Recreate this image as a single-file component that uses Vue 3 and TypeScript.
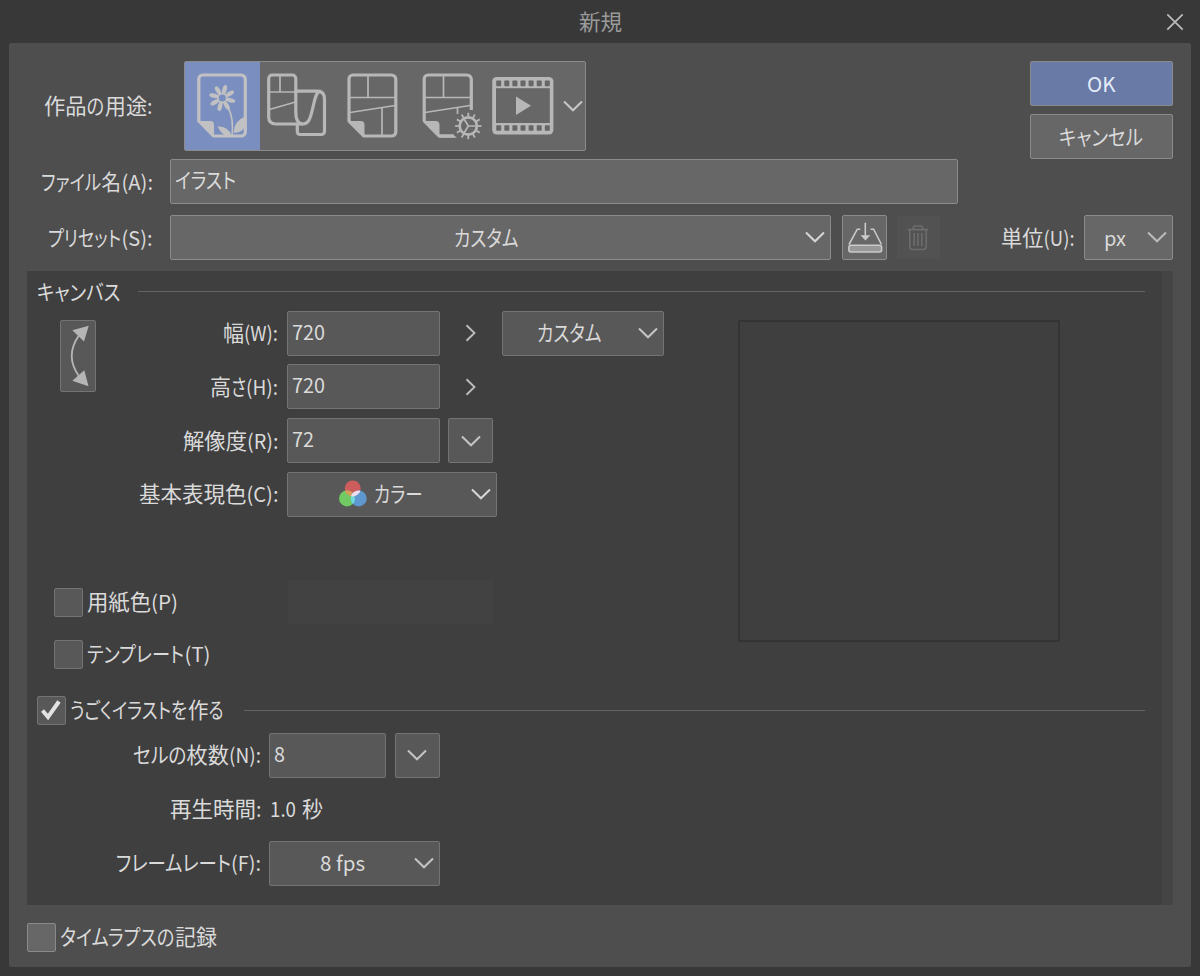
<script setup lang="ts">
import { h, ref } from 'vue'
import type { FunctionalComponent } from 'vue'

// A run is [text, horizontal offset, set width]; kana is set narrower than kanji.
type Run = [string, number, number]

const Txt: FunctionalComponent<{ runs: Run[] }> = (props) => {
  const last = props.runs[props.runs.length - 1]
  return h(
    'svg',
    { class: 'txt', width: last[1] + last[2], height: 30 },
    [
      h(
        'text',
        { y: 23.3 },
        props.runs.map(([text, x, width]) =>
          h(
            'tspan',
            {
              x,
              y: 23.3,
              textLength: width,
              lengthAdjust: 'spacingAndGlyphs',
              class: /^[\x20-\x7e]+$/.test(text) ? 'latin' : 'cjk',
            },
            text,
          ),
        ),
      ),
    ],
  )
}
Txt.props = ['runs']

const Chevron: FunctionalComponent = () =>
  h('svg', { class: 'chevron', width: 20, height: 12, viewBox: '0 0 20 12' }, [
    h('path', { d: 'M1 1.5L10 10.3L19 1.5' }),
  ])

const L: Record<string, Run[]> = {
  title: [['新規', 0, 43]],
  purpose: [['作品', 0, 42.6], ['の', 42.6, 17.6], ['用途', 60.8, 42.2], [':', 103, 5.5]],
  file: [['ファイル', 0, 60], ['名', 60.5, 19.5], ['(A):', 80.5, 31.5]],
  preset: [['プリセット', 0, 73], ['(S):', 73.5, 31]],
  unit: [['単位', 0, 42.4], ['(U):', 42.6, 31]],
  illust: [['イラスト', 0, 61]],
  custom: [['カスタム', 0, 64.5]],
  ok: [['OK', 0, 28.5]],
  cancel: [['キャンセル', 0, 84]],
  px: [['px', 0, 22]],
  canvas: [['キャンバス', 0, 83.5]],
  width: [['幅', 0, 21], ['(W):', 21, 34]],
  height: [['高', 0, 21], ['さ', 21, 15], ['(H):', 36, 32]],
  dpi: [['解像度', 0, 64], ['(R):', 64, 31.5]],
  mode: [['基本表現色', 0, 107.5], ['(C):', 107.5, 32]],
  color: [['カラー', 0, 48.5]],
  paper: [['用紙色', 0, 64], ['(P)', 64, 27]],
  template: [['テンプレート', 0, 97], ['(T)', 97.5, 26]],
  motion: [['うごくイラストを', 0, 117], ['作', 118, 20.5], ['る', 138.5, 15]],
  cels: [['セルの', 0, 53.5], ['枚数', 53.5, 42.5], ['(N):', 96, 32]],
  time: [['再生時間', 0, 86], [':', 86, 5.5]],
  seconds: [['1.0', 1, 26], ['秒', 33, 21]],
  rate: [['フレームレート', 0, 115], ['(F):', 115, 30]],
  fps: [['8 fps', 0, 45]],
  lapse: [['タイムラプスの', 0, 114.5], ['記録', 115, 42]],
  n720: [['720', 0, 33]],
  n72: [['72', 0, 22]],
  n8: [['8', 0, 11]],
}

const petals = [0, 45, 90, 135, 180, 225, 270, 315]
const teeth = Array.from({ length: 12 }, (_, i) => i * 30)
const holes = Array.from({ length: 7 }, (_, i) => 496.2 + i * 8.1)

const selected = ref(0)
const paper = ref(false)
const template = ref(false)
const motion = ref(true)
const lapse = ref(false)
</script>

<template>
  <div class="window">
    <header class="titlebar">
      <Txt class="title" :runs="L.title" />
      <svg class="close" width="18" height="18" viewBox="0 0 18 18"><path d="M1.3 1.3L16.7 16.7M16.7 1.3L1.3 16.7" /></svg>
    </header>

    <main class="body">
      <section class="top">
        <div class="top-left">
          <div class="row purpose">
            <div class="label"><Txt :runs="L.purpose" /></div>
            <div class="toolbar">
              <button class="tool first" :class="{ on: selected === 0 }" @click="selected = 0">
                <svg width="75" height="88" viewBox="185 62 75 88">
                  <path class="page" d="M198.800 121V79a4 4 0 0 1 4-4H241a4.300 4.300 0 0 1 4.300 4V132a4 4 0 0 1-4 4H213.500Z" />
                  <path class="solid" d="M198 121H210.500Q214 121 214 125V137Z" />
                  <ellipse v-for="a in petals" :key="a" class="solid" cx="222.300" cy="89.300" rx="2.200" ry="4.700" :transform="`rotate(${a + 15} 222.3 98)`" />
                  <circle class="heart" cx="222.300" cy="98" r="4.500" />
                  <path class="stem" d="M228 107.500Q234 118 232 136" />
                  <path class="solid" d="M217.500 126.500Q228 126 231.500 135.500H225Q220 132 217.500 126.500ZM245 116.500Q234 121 233.500 133Q244 132.500 245 125Z" />
                </svg>
              </button>
              <button class="tool" :class="{ on: selected === 1 }" @click="selected = 1">
                <svg width="75" height="88" viewBox="260 62 75 88">
                  <path class="page" d="M295.800 91V78.500a3.500 3.500 0 0 0-3.500-3.500H272.200a3.500 3.500 0 0 0-3.500 3.500V117Q268.700 124 276 124H303C310 124 311 115 313.500 105C315.500 96 317 91.200 320.500 91.200" />
                  <path class="page" d="M295.800 90V112Q295.800 124 303 124M296 91.200H317Q324.500 91.200 324.500 99V131.500a3 3 0 0 1-3 3H300a2.700 2.700 0 0 1-2.700-3V124" />
                  <path class="thin" d="M280 76V92M269 92H296M269.500 109.500L295.500 102" />
                </svg>
              </button>
              <button class="tool" :class="{ on: selected === 2 }" @click="selected = 2">
                <svg width="75" height="88" viewBox="335 62 75 88">
                  <path class="page" d="M349 121V79a4 4 0 0 1 4-4H391.500a4.300 4.300 0 0 1 4.300 4V132a4 4 0 0 1-4 4H364Z" />
                  <path class="solid" d="M348.500 121H361Q364.500 121 364.500 125V137Z" />
                  <path class="thin" d="M368 76V97.500M350 97.500H395M350 112.500L395 105.500M382 107.500V136" />
                </svg>
              </button>
              <button class="tool" :class="{ on: selected === 3 }" @click="selected = 3">
                <svg width="75" height="88" viewBox="410 62 75 88">
                  <path class="page" d="M454 136H439L424.200 121V79a4 4 0 0 1 4-4H467a4.300 4.300 0 0 1 4.300 4V110" />
                  <path class="solid" d="M423.500 121H435.500Q439.500 121 439.500 125V137.500ZM438 134.500H453L457 137.700H439Z" />
                  <path class="thin" d="M443.500 76V97.500M425 97.500H470M425 112.500L470 105.500M457.500 107.500V114" />
                  <circle class="gear" cx="468.300" cy="126" r="8.600" />
                  <path v-for="a in teeth" :key="a" class="tooth" d="M468.300 117.500V112.800" :transform="`rotate(${a} 468.3 126)`" />
                  <path class="thin" d="M468.300 126H476M468.300 126L464.400 119.500M468.300 126L464.400 132.500" />
                </svg>
              </button>
              <button class="tool" :class="{ on: selected === 4 }" @click="selected = 4">
                <svg width="75" height="88" viewBox="485 62 75 88">
                  <rect class="solid" x="492.200" y="77" width="61.200" height="57.600" rx="4.500" />
                  <rect class="hole" x="496" y="88.200" width="53.800" height="34.800" />
                  <rect v-for="x in holes" :key="x" class="hole" :x="x" y="80.500" width="5" height="5.700" rx=".7" />
                  <rect v-for="x in holes" :key="x + 1000" class="hole" :x="x" y="125.200" width="5" height="5.600" rx=".7" />
                  <path class="solid" d="M516 96.500L531 105.800L516 115Z" />
                </svg>
              </button>
              <Chevron />
            </div>
          </div>

          <div class="row">
            <div class="label"><Txt :runs="L.file" /></div>
            <div class="field file"><Txt :runs="L.illust" /></div>
          </div>
        </div>
        <div class="actions">
          <button class="field button primary"><Txt :runs="L.ok" /></button>
          <button class="field button"><Txt :runs="L.cancel" /></button>
        </div>
      </section>

      <section class="row preset-row">
        <div class="label"><Txt :runs="L.preset" /></div>
        <div class="field select preset"><Txt :runs="L.custom" /><Chevron /></div>
        <button class="field square save">
          <svg width="36" height="32" viewBox="847 221 36 32">
            <path d="M860.300 228.200H857.300L849 243.500M870.600 228.200H873.600L881.500 243.500" />
            <rect class="base" x="848.900" y="244.200" width="32.700" height="6.800" rx="2" />
            <path d="M865.300 221.700V237" /><path class="tip" d="M860.500 234.200H870.300L865.400 239.500Z" />
          </svg>
        </button>
        <button class="trash" disabled>
          <svg width="22" height="26" viewBox="907 225 22 26">
            <path d="M907.700 229.700H928.200M913.500 229V227.500Q913.500 226 915 226H921Q922.500 226 922.500 227.500V229M909.800 230V246Q909.800 249.500 913 249.500H923Q926.200 249.500 926.200 246V230M914.200 233V246M918 233V246M921.800 233V246" />
          </svg>
        </button>
        <div class="unit-label"><Txt :runs="L.unit" /></div>
        <div class="field select unit"><Txt :runs="L.px" /><Chevron /></div>
      </section>

      <section class="panel">
        <div class="content">
          <div class="heading"><Txt :runs="L.canvas" /><hr></div>
          <div class="canvas">
            <button class="field swap">
              <svg width="34" height="70" viewBox="61 320.500 34 70">
                <path class="arc" d="M78.500 335.500Q65 355.500 78.500 375" />
                <path class="head" d="M88.700 325.200L72.300 329.700L84 341ZM88.500 385.800L72.300 380.300L84.300 369.800Z" />
              </svg>
            </button>
            <div class="settings">
              <div class="line">
                <div class="label"><Txt :runs="L.width" /></div>
                <div class="field number"><Txt :runs="L.n720" /></div>
                <svg class="more" width="12" height="18" viewBox="0 0 12 18"><path d="M1.500 1.200L9.500 9L1.500 16.800" /></svg>
                <div class="field select size"><Txt :runs="L.custom" /><Chevron /></div>
              </div>
              <div class="line">
                <div class="label"><Txt :runs="L.height" /></div>
                <div class="field number"><Txt :runs="L.n720" /></div>
                <svg class="more" width="12" height="18" viewBox="0 0 12 18"><path d="M1.500 1.200L9.500 9L1.500 16.800" /></svg>
              </div>
              <div class="line">
                <div class="label"><Txt :runs="L.dpi" /></div>
                <div class="field number"><Txt :runs="L.n72" /></div>
                <button class="field square"><Chevron /></button>
              </div>
              <div class="line">
                <div class="label"><Txt :runs="L.mode" /></div>
                <div class="field select mode">
                  <svg class="rgb" width="28" height="28" viewBox="338 481 28 28">
                    <defs>
                      <clipPath id="red"><circle cx="351.700" cy="489.400" r="8" /></clipPath>
                      <clipPath id="green"><circle cx="346" cy="499.400" r="8" /></clipPath>
                    </defs>
                    <circle cx="351.700" cy="489.400" r="8" fill="#cd5c5c" />
                    <circle cx="346" cy="499.400" r="8" fill="#70c963" />
                    <circle cx="357.700" cy="499.400" r="8" fill="#5f97cf" />
                    <circle cx="346" cy="499.400" r="8" fill="#d99a5c" clip-path="url(#red)" />
                    <circle cx="357.700" cy="499.400" r="8" fill="#6fdbd8" clip-path="url(#green)" />
                    <circle cx="357.700" cy="499.400" r="8" fill="#eedcee" clip-path="url(#red)" />
                  </svg>
                  <Txt :runs="L.color" /><Chevron />
                </div>
              </div>
            </div>
            <div class="preview"></div>
            <div class="options">
              <div class="option">
                <button class="check" @click="paper = !paper"><svg v-if="paper" width="20" height="20" viewBox="0 0 20 20"><path d="M1.500 10.500L8 17L18.500 1.500" /></svg></button>
                <Txt :runs="L.paper" />
                <div class="swatch"></div>
              </div>
              <div class="option">
                <button class="check" @click="template = !template"><svg v-if="template" width="20" height="20" viewBox="0 0 20 20"><path d="M1.500 10.500L8 17L18.500 1.500" /></svg></button>
                <Txt :runs="L.template" />
              </div>
            </div>
          </div>

          <div class="heading motion">
            <button class="check" @click="motion = !motion"><svg v-if="motion" width="20" height="20" viewBox="0 0 20 20"><path d="M1.500 10.500L7 17L18 1.500" /></svg></button>
            <Txt :runs="L.motion" /><hr>
          </div>
          <div class="frames">
            <div class="line">
              <div class="label"><Txt :runs="L.cels" /></div>
              <div class="field number"><Txt :runs="L.n8" /></div>
              <button class="field square"><Chevron /></button>
            </div>
            <div class="line">
              <div class="label"><Txt :runs="L.time" /></div>
              <Txt :runs="L.seconds" />
            </div>
            <div class="line">
              <div class="label"><Txt :runs="L.rate" /></div>
              <div class="field select fps"><Txt :runs="L.fps" /><Chevron /></div>
            </div>
          </div>
        </div>
        <div class="track"></div>
      </section>

      <footer class="footer">
        <button class="check" @click="lapse = !lapse"><svg v-if="lapse" width="20" height="20" viewBox="0 0 20 20"><path d="M1.500 10.500L8 17L18.500 1.500" /></svg></button>
        <Txt :runs="L.lapse" />
      </footer>
    </main>
  </div>
</template>

<style>
body { margin: 0; background: #383838; }
.txt { display: block; flex: none; overflow: visible; fill: #dadada; font-family: "Noto Sans CJK JP", sans-serif; }
.txt .cjk { font-size: 21.300px; font-feature-settings: "palt"; }
.txt .latin { font-size: 20.300px; }
.chevron { display: block; flex: none; fill: none; stroke: #d6d6d6; stroke-width: 2; }
</style>

<style scoped>
* { box-sizing: border-box; }
button { padding: 0; margin: 0; border: 0; background: none; font: inherit; }
svg { display: block; flex: none; }
.window { width: 1200px; height: 976px; background: #383838; overflow: hidden; }
.titlebar { height: 43px; display: grid; grid-template-columns: 1fr auto 1fr; align-items: center; padding: 1px 16px 0; }
.title { grid-column: 2; fill: #9b9b9b; }
.close { justify-self: end; fill: none; stroke: #bcbcbc; stroke-width: 1.700; }
.body { width: 1182px; height: 924px; margin-left: 9px; border-radius: 2px; background: #4e4e4e; padding: 18px 18px 0 0; }
.top { display: flex; justify-content: space-between; }
.row { display: flex; align-items: center; }
.label { flex: none; display: flex; justify-content: flex-end; width: 143.500px; margin-right: 17.500px; }
.purpose { height: 90px; margin-bottom: 8px; }
.purpose .label { width: 143px; margin-right: 32px; }
.toolbar { display: flex; align-items: center; width: 402px; height: 90px; border: 1px solid #8b8b8b; border-radius: 2px; background: #676767; }
.toolbar .chevron { margin-left: 2.500px; stroke: #c6c6c6; }
.tool { flex: none; width: 75px; height: 88px; }
.tool.on { background: #7a8fbf; }
.page { fill: none; stroke: #b7b7b7; stroke-width: 3.200; stroke-linejoin: round; }
.first .page { stroke: #c1c1c3; }
.thin { fill: none; stroke: #b7b7b7; stroke-width: 1.700; }
.solid { fill: #b7b7b7; }
.first .solid { fill: #c1c1c3; }
.heart { fill: #7a8fbf; stroke: #c1c1c3; stroke-width: 1.800; }
.stem { fill: none; stroke: #c1c1c3; stroke-width: 1.600; }
.gear { fill: #676767; stroke: #b7b7b7; stroke-width: 2.700; }
.tooth { stroke: #b7b7b7; stroke-width: 1.800; }
.hole { fill: #676767; }
.field { flex: none; display: flex; align-items: center; height: 45px; border: 1px solid #8b8b8b; border-radius: 2px; background: #676767; }
.file { width: 788px; padding: 0 0 3px 4px; }
.actions { display: flex; flex-direction: column; gap: 8px; }
.button { width: 143.500px; justify-content: center; }
.primary { background: #6a7aa6; }
.primary .txt { fill: #e3ecf8; }
.preset-row { margin-top: 11px; }
.select { justify-content: flex-end; }
.select .chevron { margin-bottom: 1px; }
.preset { width: 661px; padding-right: 5px; }
.preset .chevron { margin-left: 286.500px; }
.square { width: 45px; justify-content: center; }
.save { margin-left: 11px; }
.save svg { fill: none; stroke: #c9c9c9; stroke-width: 1.600; }
.save .base { fill: #989898; }
.save .tip { fill: #c9c9c9; stroke: none; }
.trash { display: flex; align-items: center; justify-content: center; width: 43px; height: 43px; margin-left: 10px; padding-right: 1px; background: #525252; }
.trash svg { fill: none; stroke: #6c6c6c; stroke-width: 1.700; }
.unit-label { margin-left: auto; margin-right: 9px; }
.unit { width: 89px; padding-right: 5px; }
.unit .chevron { margin-left: 21px; stroke: #bbb; }
.panel { display: flex; width: 1146px; height: 634.500px; margin: 10.500px 0 0 18px; background: #3f3f3f; }
.panel .field { background: #585858; border-color: #747474; height: 45px; }
.content { width: 1135px; }
.track { width: 11px; background: #454545; }
.heading { display: flex; align-items: center; height: 30px; margin: 6px 17px 0 10px; }
.heading hr { flex: 1; height: 1px; margin: 0 0 0 17px; border: 0; background: #646464; }
.canvas { display: grid; grid-template-columns: 33px 607px 1fr; grid-template-rows: 269.500px auto; margin-top: 4.300px; height: 379.500px; align-items: start; }
.panel .swap { width: 36px; height: 72px; margin: 9px 0 0 33px; justify-content: center; }
.arc { fill: none; stroke: #b5b5b5; stroke-width: 1.800; }
.head { fill: #b5b5b5; }
.settings { display: flex; flex-direction: column; gap: 8.700px; margin-left: 35.300px; }
.line { display: flex; align-items: center; height: 45px; }
.settings .label { width: 183px; margin-right: 9px; }
.number { width: 152.500px; padding: 0 0 3px 3.500px; }
.settings .square { margin-left: 8.500px; }
.more { margin-left: 25px; fill: none; stroke: #bbb; stroke-width: 1.900; }
.size { width: 161.500px; margin-left: 25.500px; padding-right: 5px; }
.size .chevron { margin-left: 36px; stroke: #c4c4c4; }
.mode { width: 209.500px; padding-right: 4.500px; }
.mode .txt { margin-left: 7px; }
.mode .chevron { margin-left: 49px; }
.square .chevron { stroke: #c4c4c4; }
.preview { width: 322px; height: 322px; margin: 9.200px 0 0 71px; border: 2px solid #343434; grid-row: 1 / 3; grid-column: 3; }
.options { grid-row: 2; grid-column: 1 / 3; margin-left: 27px; }
.option { display: flex; align-items: center; height: 44px; margin-bottom: 8px; }
.check { flex: none; display: flex; align-items: center; justify-content: center; width: 29px; height: 29px; border: 1px solid #747474; border-radius: 2px; background: #585858; margin-right: 4px; }
.check svg { fill: none; stroke: #e2e2e2; stroke-width: 4; }
.swatch { width: 206px; height: 44px; margin-left: 109.500px; background: #424242; }
.motion { margin-top: 5px; margin-left: 9.500px; }
.motion hr { margin-left: 20.500px; }
.frames { display: flex; flex-direction: column; gap: 9px; margin-top: 7.500px; }
.frames .label { width: 234px; margin-right: 8px; }
.frames .number { width: 117px; }
.frames .square { margin-left: 8.500px; }
.fps { width: 171px; padding-right: 5px; }
.fps .chevron { margin-left: 49.500px; stroke: #c4c4c4; }
.footer { display: flex; align-items: center; height: 30px; margin: 17px 0 0 17.500px; }
.footer .check { background: #676767; border-color: #8b8b8b; }
</style>
